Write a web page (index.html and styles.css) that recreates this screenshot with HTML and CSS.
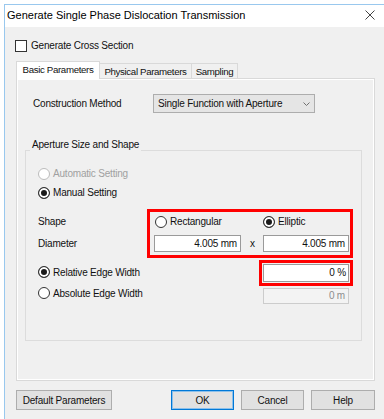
FILE: index.html
```html
<!DOCTYPE html>
<html lang="en">
<head>
  <meta charset="UTF-8" />
  <title>Generate Single Phase Dislocation Transmission</title>
  <link rel="stylesheet" href="styles.css">
</head>
<body>
  <div class="window">
    <div class="titlebar">
      <span class="title">Generate Single Phase Dislocation Transmission</span>
      <svg class="close" width="10" height="10" viewBox="0 0 10 10">
        <path d="M0.5 0.5L9.5 9.5M9.5 0.5L0.5 9.5" stroke="#444" stroke-width="1" fill="none"/>
      </svg>
    </div>

    <div class="client">
      <div class="check-row"><span class="checkbox"></span>Generate Cross Section</div>

      <div class="tabs">
        <div class="tab-strip">
          <div class="tab active">Basic Parameters</div>
          <div class="tab">Physical Parameters</div>
          <div class="tab">Sampling</div>
        </div>

        <div class="tab-page">
          <div class="field-row">
            <span class="method-label">Construction Method</span>
            <div class="combo">
              <span>Single Function with Aperture</span>
              <svg width="7" height="4" viewBox="0 0 7 4">
                <path d="M0.5 0.5L3.5 3.5L6.5 0.5" fill="none" stroke="#707070"/>
              </svg>
            </div>
          </div>

          <fieldset class="group">
            <legend>Aperture Size and Shape</legend>
            <div class="radio-row disabled"><span class="radio"></span>Automatic Setting</div>
            <div class="radio-row"><span class="radio checked"></span>Manual Setting</div>

            <div class="shape-block">
              <div class="shape-labels">
                <span>Shape</span>
                <span>Diameter</span>
              </div>
              <div class="mark shape-box">
                <div class="radio-row rect"><span class="radio"></span>Rectangular</div>
                <span></span>
                <div class="radio-row"><span class="radio checked"></span>Elliptic</div>
                <div class="textbox">4.005 mm</div>
                <span class="times">x</span>
                <div class="textbox">4.005 mm</div>
              </div>
            </div>

            <div class="edge-row">
              <div class="radio-row"><span class="radio checked"></span>Relative Edge Width</div>
              <div class="mark edge-box"><div class="textbox">0 %</div></div>
            </div>
            <div class="edge-row absolute">
              <div class="radio-row"><span class="radio"></span>Absolute Edge Width</div>
              <div class="textbox off">0 m</div>
            </div>
          </fieldset>
        </div>
      </div>

      <div class="buttons">
        <button class="btn wide">Default Parameters</button>
        <button class="btn default push">OK</button>
        <button class="btn">Cancel</button>
        <button class="btn help">Help</button>
      </div>
    </div>
  </div>
</body>
</html>
```

FILE: styles.css
```css
* {
  box-sizing: border-box;
}
body {
  margin: 0;
  background: #fff;
  font-family: "Liberation Sans", Arial, sans-serif;
  font-size: 10px;
  letter-spacing: -0.2px;
  color: #111;
}
.window {
  margin: 4px 0 0 4px;
  height: 415px;
  border-top: 1px solid #99c8ee;
  border-left: 1px solid #99c8ee;
  background: #f0f0f0;
}
.titlebar {
  height: 22px;
  background: #fff;
  display: flex;
  align-items: center;
  justify-content: space-between;
  padding: 0 9px 2px 2px;
}
.title {
  font-size: 11px;
  letter-spacing: 0;
  color: #000;
}
.client {
  padding: 12px 9px 0 11px;
}
.check-row {
  display: flex;
  align-items: center;
  height: 13px;
  margin-left: -1px;
}
.checkbox {
  width: 12px;
  height: 12px;
  border: 1px solid #333;
  background: #fff;
  margin-right: 4px;
}

/* tabs */
.tabs {
  margin-top: 9px;
}
.tab-strip {
  display: flex;
  align-items: flex-end;
  height: 18px;
  margin-bottom: -1px;
  font-size: 9.7px;
  letter-spacing: -0.35px;
}
.tab {
  height: 15px;
  margin-bottom: 1px;
  border: 1px solid #d9d9d9;
  border-bottom: none;
  border-left: none;
  background: #f0f0f0;
  display: flex;
  align-items: center;
  justify-content: center;
  width: 92px;
}
.tab:last-child {
  width: 46px;
}
.tab.active {
  position: relative;
  z-index: 1;
  height: 18px;
  margin-bottom: 0;
  width: 84px;
  background: #fff;
  border-left: 1px solid #d9d9d9;
  padding-bottom: 2px;
}
.tab-page {
  height: 303px;
  border: 1px solid #d9d9d9;
  box-shadow: inset 0 0 0 1px #fff;
  padding-top: 15px;
}
.field-row {
  display: flex;
  align-items: center;
  height: 19px;
  padding-left: 16px;
}
.method-label {
  width: 120px;
}
.combo {
  width: 162px;
  height: 19px;
  border: 1px solid #adadad;
  background: #e5e5e5;
  display: flex;
  align-items: center;
  justify-content: space-between;
  padding: 0 4px 0 4px;
}

/* group box */
.group {
  margin: 26px 12px 0 8px;
  border: 1px solid #dcdcdc;
  padding: 3px 8px 36px 12px;
  min-width: 0;
}
.group legend {
  padding: 0 2px 10px;
  margin-left: -8px;
  line-height: 12px;
}
.radio-row {
  display: flex;
  align-items: center;
  height: 19px;
}
.radio {
  width: 12px;
  height: 12px;
  border: 1px solid #333;
  border-radius: 50%;
  background: #fff;
  margin-right: 3px;
  flex: none;
}
.radio.checked {
  background: #1a1a1a;
  box-shadow: inset 0 0 0 2px #fff;
}
.disabled {
  color: #a0a0a0;
}
.disabled .radio {
  border-color: #bcbcbc;
}

.shape-block {
  display: flex;
  margin-top: 7px;
}
.shape-labels {
  width: 109px;
  display: grid;
  grid-template-rows: 19px 17px;
  row-gap: 4px;
  align-items: center;
  padding-top: 3px;
}
.mark {
  border: 3px solid #f00;
}
.shape-box {
  display: grid;
  grid-template-columns: 87px 22px 86px;
  grid-template-rows: 19px 17px;
  row-gap: 4px;
  align-items: center;
  padding: 0 1px 3px 4px;
}
.rect {
  margin-left: 1px;
}
.times {
  text-align: center;
  padding-left: 1px;
}
.textbox {
  height: 17px;
  border: 1px solid #9a9a9a;
  background: #fff;
  text-align: right;
  padding-right: 3px;
  line-height: 15px;
}
.edge-row {
  display: flex;
  justify-content: space-between;
  align-items: center;
}
.edge-box {
  margin-top: 2px;
  padding: 1px;
}
.edge-box .textbox {
  width: 86px;
  height: 18px;
  line-height: 16px;
  padding-right: 2px;
}
.edge-row.absolute {
  align-items: flex-start;
}
.edge-row.absolute .radio-row {
  height: 14px;
}
.textbox.off {
  width: 86px;
  height: 16px;
  line-height: 14px;
  margin: 2px 4px 0 0;
  background: #f3f3f3;
  border-color: #cccccc;
  color: #8d8d8d;
}

/* dialog buttons */
.buttons {
  display: flex;
  gap: 7px;
  margin-top: 9px;
}
.btn {
  height: 20px;
  width: 63px;
  padding: 0;
  border: 1px solid #adadad;
  background: #e1e1e1;
  font-family: inherit;
  font-size: 10px;
  letter-spacing: -0.2px;
  color: #111;
}
.btn.wide {
  width: 96px;
}
.btn.help {
  width: 64px;
}
.btn.default {
  border-color: #0078d7;
  box-shadow: inset 0 0 0 1px #8cc0ea;
}
.push {
  margin-left: auto;
}
```
